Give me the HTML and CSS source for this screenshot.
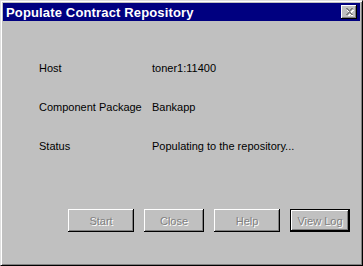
FILE: index.html
```html
<!DOCTYPE html>
<html lang="en">
<head>
    <meta charset="UTF-8">
    <title>Populate Contract Repository</title>
    <link rel="stylesheet" href="styles.css">
</head>
<body>
    <div class="window">
        <div class="title-bar">
            <span class="title">Populate Contract Repository</span>
            <button class="close-btn" disabled>
                <svg width="9" height="8" viewBox="0 0 9 8">
                    <path d="M1 1h2v1h1v1h1v-1h1v-1h2v1h-1v1h-1v1h-1v1h1v1h1v1h1v1h-2v-1h-1v-1h-1v1h-1v1h-2v-1h1v-1h1v-1h1v-1h-1v-1h-1v-1h-1z" fill="#fff" transform="translate(1 1)"/>
                    <path d="M1 1h2v1h1v1h1v-1h1v-1h2v1h-1v1h-1v1h-1v1h1v1h1v1h1v1h-2v-1h-1v-1h-1v1h-1v1h-2v-1h1v-1h1v-1h1v-1h-1v-1h-1v-1h-1z" fill="#808080" transform="translate(0 -1)"/>
                </svg>
            </button>
        </div>
        <div class="content">
            <div class="info">
                <div class="label">Host</div>
                <div class="value">toner1:11400</div>
                <div class="label">Component Package</div>
                <div class="value">Bankapp</div>
                <div class="label">Status</div>
                <div class="value">Populating to the repository...</div>
            </div>
            <div class="buttons">
                <button class="button wide" disabled>Start</button>
                <button class="button" disabled>Close</button>
                <button class="button wide" disabled>Help</button>
                <button class="button default">View Log</button>
            </div>
        </div>
    </div>
</body>
</html>
```

FILE: styles.css
```css
body {
    margin: 0;
    background: #c0c0c0;
    font-family: 'Liberation Sans', Arial, sans-serif;
    font-size: 11px;
}
.window {
    width: 363px;
    height: 266px;
    box-sizing: border-box;
    border-style: solid;
    border-width: 1px;
    border-color: #dfdfdf #000 #000 #dfdfdf;
    background: #c0c0c0;
    box-shadow: inset 1px 1px 0 #fff, inset -1px -1px 0 #808080;
    padding: 2px;
    display: flex;
    flex-direction: column;
}
.title-bar {
    height: 18px;
    background: #000080;
    display: flex;
    align-items: center;
    justify-content: space-between;
    padding: 0 3px 0 3px;
}
.title {
    color: #fff;
    font-weight: 700;
    font-size: 13px;
    letter-spacing: 0.15px;
}
.close-btn {
    width: 16px;
    height: 14px;
    padding: 0;
    background: #c0c0c0;
    border: none;
    box-shadow: inset -1px -1px 0 #000, inset 1px 1px 0 #fff, inset -2px -2px 0 #808080;
    display: flex;
    align-items: center;
    justify-content: center;
}
.content {
    flex: 1;
    display: flex;
    flex-direction: column;
}
.info {
    display: grid;
    grid-template-columns: 113px auto;
    row-gap: 25px;
    padding: 40px 0 0 36px;
    color: #000;
    line-height: 14px;
}
.buttons {
    display: flex;
    gap: 10px;
    padding: 56px 0 0 65px;
}
.button {
    width: 60px;
    height: 23px;
    padding: 0;
    background: #c0c0c0;
    border: none;
    font-family: inherit;
    font-size: 11px;
    color: #808080;
    text-shadow: 1px 1px 0 #fff;
    box-shadow: inset -1px -1px 0 #000, inset 1px 1px 0 #fff, inset -2px -2px 0 #808080;
}
.button.wide {
    width: 66px;
}
.button.default {
    box-shadow: inset 0 0 0 1px #000, inset -2px -2px 0 #000, inset 2px 2px 0 #fff, inset -3px -3px 0 #808080;
}
```
